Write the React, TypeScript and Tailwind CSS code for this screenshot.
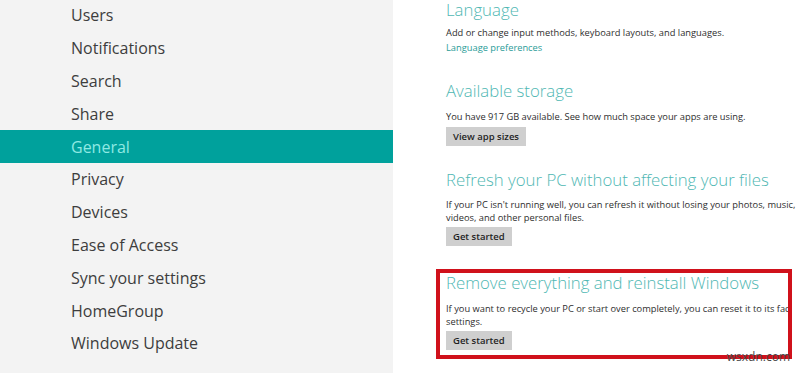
const menu = [
  "Users",
  "Notifications",
  "Search",
  "Share",
  "General",
  "Privacy",
  "Devices",
  "Ease of Access",
  "Sync your settings",
  "HomeGroup",
  "Windows Update",
];

const font = { fontFamily: '"Open Sans", "Noto Sans", sans-serif' };

function GrayButton({ label }: { label: string }) {
  return (
    <div className="bg-[#cfcfcf] text-[#1f1f1f] text-[9.5px] font-semibold px-[7px] h-[19px] leading-[19px] w-fit">
      {label}
    </div>
  );
}

export default function App() {
  return (
    <div
      className="relative flex w-[800px] h-[373px] overflow-hidden bg-white"
      style={font}
    >
      {/* Left menu */}
      <div className="w-[393px] shrink-0 bg-[#f3f3f3] mt-[-1px]">
        {menu.map((item) => {
          const active = item === "General";
          return (
            <div
              key={item}
              className={
                active
                  ? "h-[32.8px] flex items-center pl-[71px] bg-[#00a19c] text-[#8fe9e3] text-[16px]"
                  : "h-[32.8px] flex items-center pl-[71px] text-[#3d3d3d] text-[16px]"
              }
            >
              {item}
            </div>
          );
        })}
      </div>

      {/* Right settings */}
      <div className="flex-1 pl-[53px] text-[#2e2e2e] text-[9.3px] whitespace-nowrap">
        <div className="text-[#4fb7b3] text-[16.8px] font-light leading-[20px]">Language</div>
        <div className="leading-[14px] mt-[6px]">
          Add or change input methods, keyboard layouts, and languages.
        </div>
        <div className="leading-[14px] mt-[1px] text-[#2b9c98]">Language preferences</div>

        <div className="text-[#4fb7b3] text-[16.8px] font-light leading-[22px] mt-[25px]">Available storage</div>
        <div className="leading-[14px] mt-[8px]">
          You have 917 GB available. See how much space your apps are using.
        </div>
        <div className="mt-[3px]">
          <GrayButton label="View app sizes" />
        </div>

        <div className="text-[#4fb7b3] text-[16.8px] font-light leading-[22px] mt-[23px]">
          Refresh your PC without affecting your files
        </div>
        <div className="leading-[13px] mt-[7px]">
          If your PC isn't running well, you can refresh it without losing your photos, music,
          <br />
          videos, and other personal files.
        </div>
        <div className="mt-[3px]">
          <GrayButton label="Get started" />
        </div>

        <div className="ml-[-10px] mt-[23px] w-[356px] h-[90px] border-[4px] border-[#d0111b] pl-[6px] overflow-hidden">
          <div className="text-[#4fb7b3] text-[16.8px] font-light leading-[20px]">
            Remove everything and reinstall Windows
          </div>
          <div className="leading-[13px] mt-[9px]">
            If you want to recycle your PC or start over completely, you can reset it to its factory
            <br />
            settings.
          </div>
          <div className="mt-[3px]">
            <GrayButton label="Get started" />
          </div>
        </div>
      </div>

      {/* watermark */}
      <div className="absolute right-[10px] bottom-[9px] text-[12px] leading-[14px] text-[#4a4a4a]">
        wsxdn.com
      </div>
    </div>
  );
}
